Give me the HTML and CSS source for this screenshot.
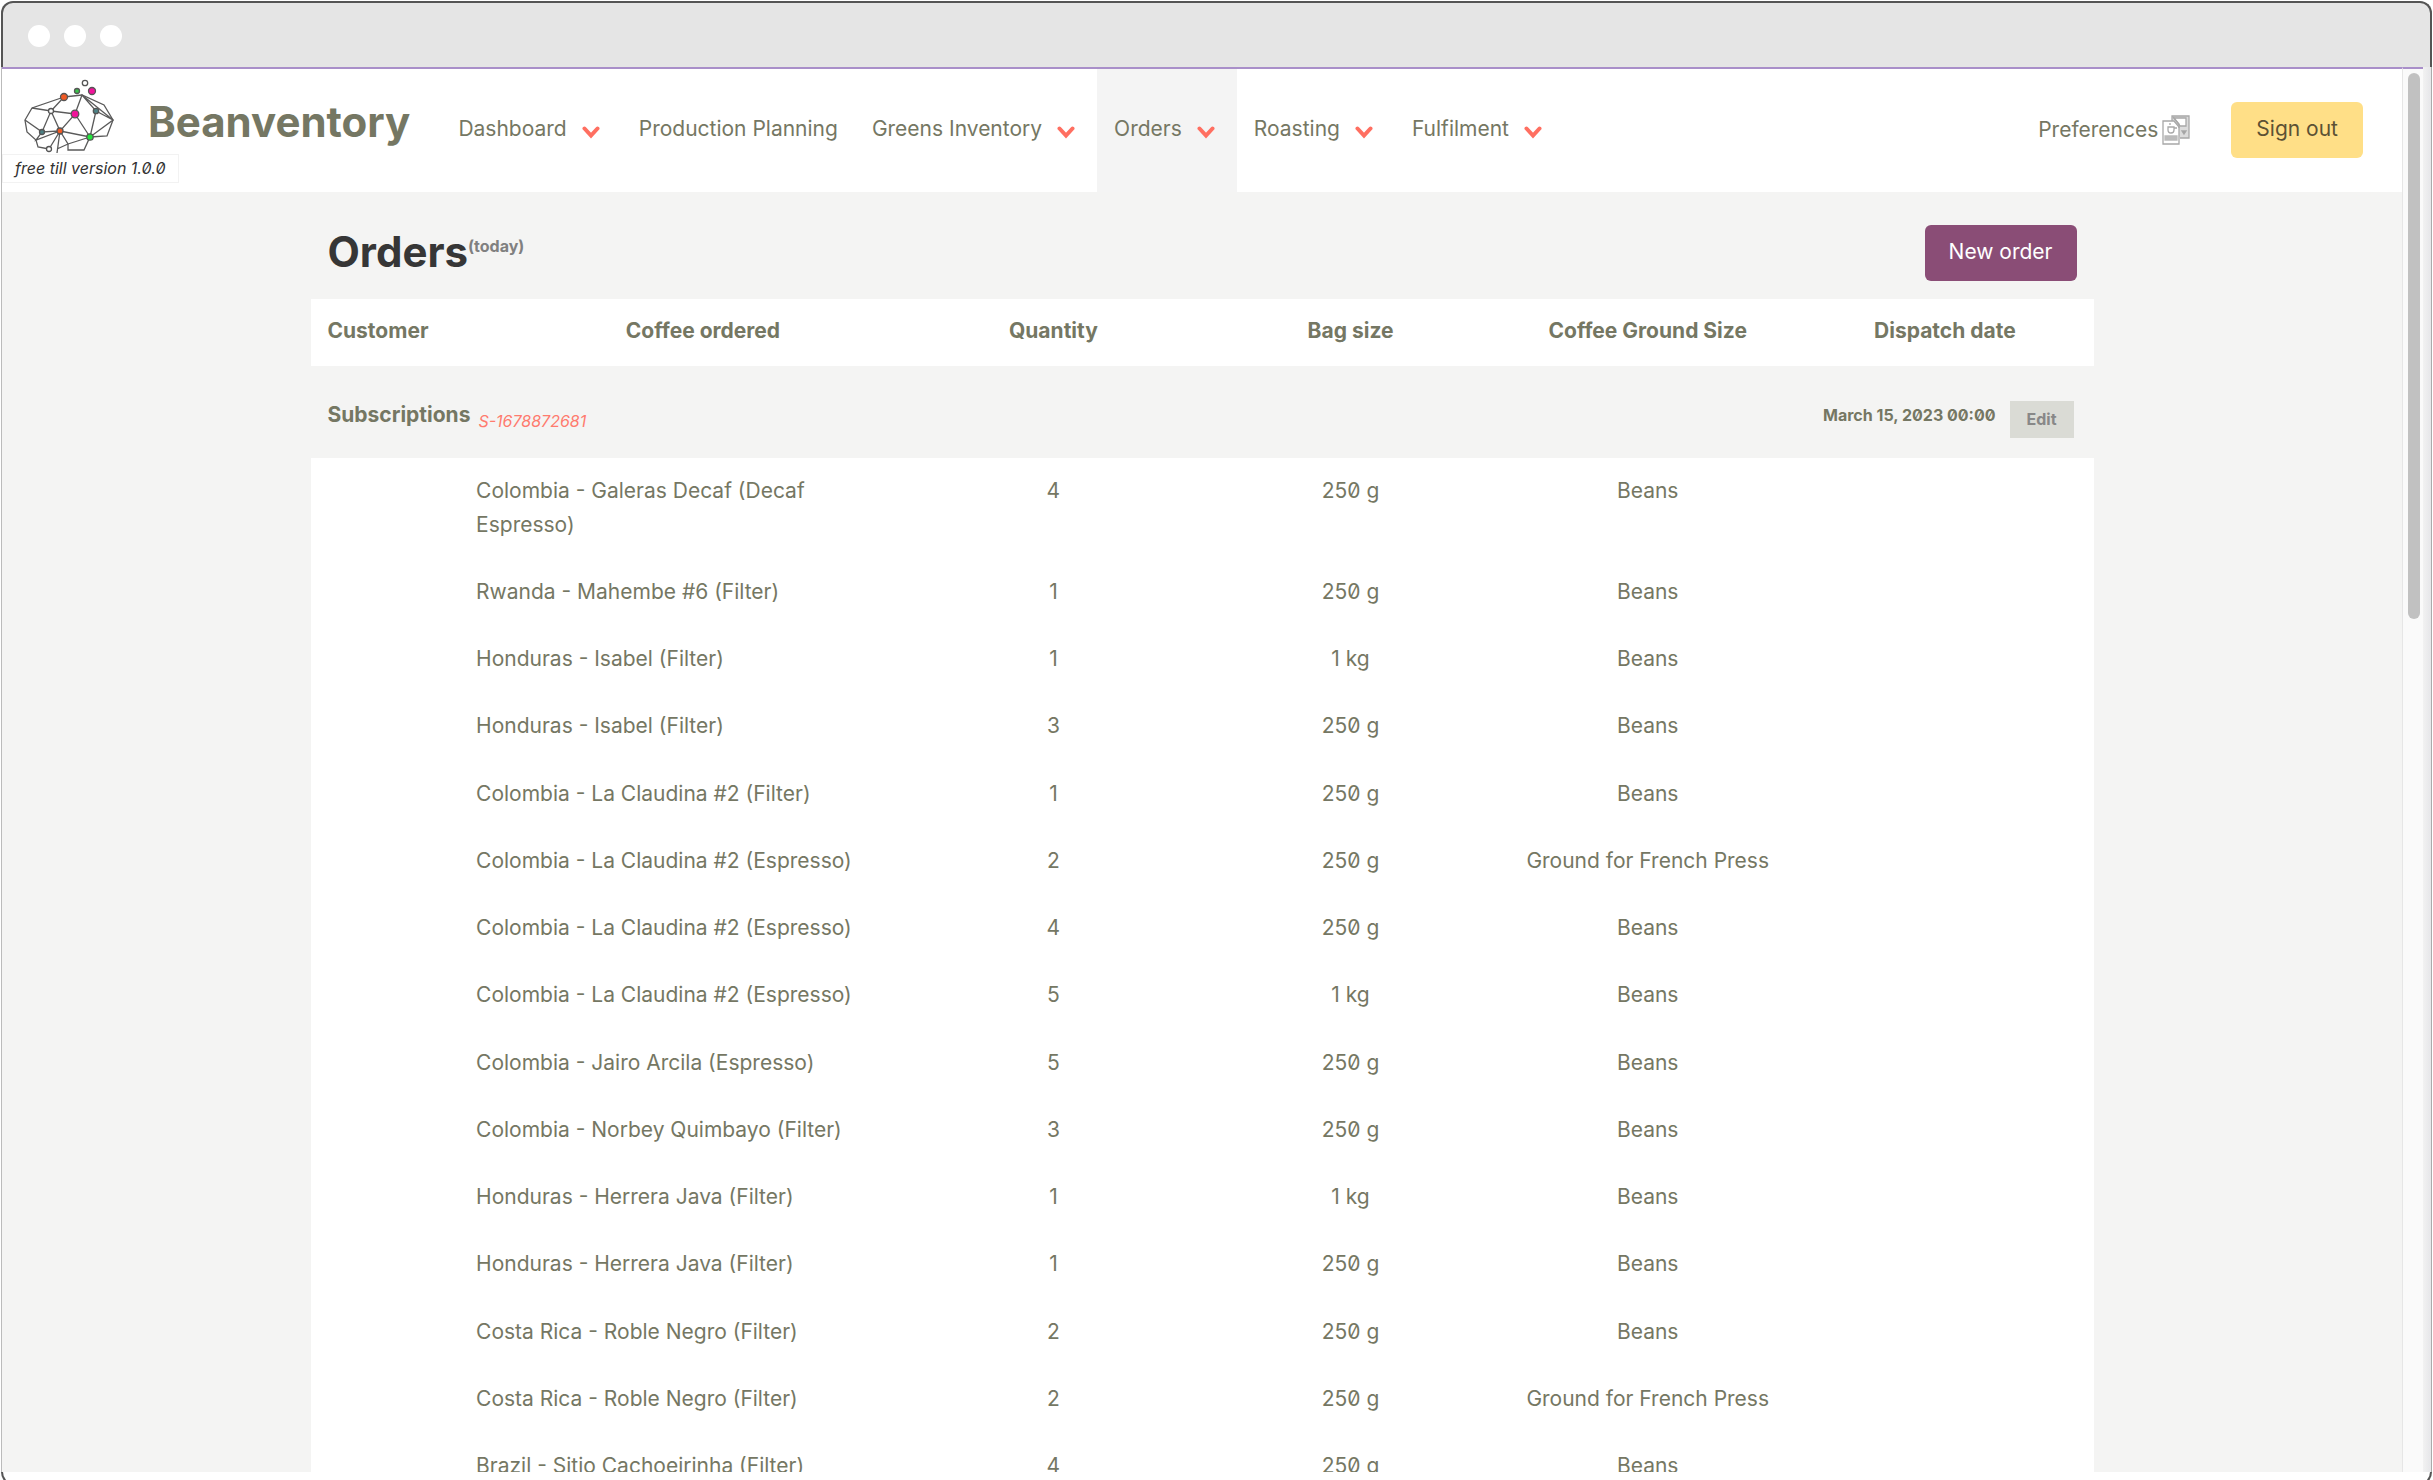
FILE: index.html
```html
<!DOCTYPE html>
<html lang="en">
<head>
<meta charset="utf-8">
<title>Beanventory – Orders</title>
<link rel="stylesheet" href="styles.css">
</head>
<body>
<svg class="defs" aria-hidden="true"><symbol id="chevron" viewBox="0 0 18 13"><path d="M2.500 2.500 9 9.500l6.500-7" fill="none" stroke="#ff6f61" stroke-width="4" stroke-linecap="round"/></symbol></svg>
<div class="chrome"><i class="dot"></i><i class="dot"></i><i class="dot"></i></div>
<div class="viewport">
  <div class="page">
    <header class="topbar">
      <a class="brand" href="#">
        <svg class="logo" viewBox="24 78 92 76" width="92" height="76" aria-hidden="true">
          <g fill="none" stroke="#5a5a5a" stroke-width="1.300">
            <path d="M64 97 32 108l-7 12 2 12 9 8 2 7 11 2M64 97l18-2 22 10 9 15-6 16-17 1-6 13H68v-6l-8-13"/>
            <path d="M32 108l19 3 13-14M51 111l24 3 7-19 14 16 17 9-23 17 6-26M82 95l31 25M75 114l15 23-30-6zM51 111l9 20-18 1zM25 120l17 12-6 8 24-9-11 18M60 131l-3 22M90 137l-22 7-11 5"/>
          </g>
          <g stroke="#555" stroke-width="1.300">
            <circle cx="64" cy="97" r="3.500" fill="#f15a24"/><circle cx="60" cy="131" r="3" fill="#f15a24"/>
            <circle cx="92" cy="91" r="3.500" fill="#f0149a"/><circle cx="75" cy="114" r="3.800" fill="#f0149a"/>
            <circle cx="77" cy="91" r="2.500" fill="#39c44a"/><circle cx="90" cy="137" r="3.200" fill="#22e53c"/>
            <circle cx="96" cy="111" r="2.700" fill="#4c8286"/><circle cx="42" cy="132" r="2.500" fill="#4c8286"/>
            <circle cx="85" cy="83" r="2.700" fill="#fff"/><circle cx="51" cy="111" r="2.500" fill="#fff"/><circle cx="49" cy="149" r="2.500" fill="#fff"/>
          </g>
        </svg>
        <span class="brand-name">Beanventory</span>
      </a>
      <span class="version">free till version 1.0.0</span>
      <nav class="nav">
        <a class="nav-item has-menu" href="#">Dashboard<svg class="chev"><use href="#chevron"/></svg></a>
        <a class="nav-item" href="#">Production Planning</a>
        <a class="nav-item has-menu" href="#">Greens Inventory<svg class="chev"><use href="#chevron"/></svg></a>
        <a class="nav-item has-menu active" href="#">Orders<svg class="chev"><use href="#chevron"/></svg></a>
        <a class="nav-item has-menu" href="#">Roasting<svg class="chev"><use href="#chevron"/></svg></a>
        <a class="nav-item has-menu" href="#">Fulfilment<svg class="chev"><use href="#chevron"/></svg></a>
      </nav>
      <div class="account">
        <a class="prefs" href="#">Preferences
          <svg width="28" height="30" viewBox="0 0 28 30" fill="none" stroke="#a8a8a8" stroke-width="1.300" aria-hidden="true"><path d="M10 6V1h17v22h-9" fill="#dcdcdc"/><path d="M12 3h12v8h-6z" fill="#fff"/><path d="M1 6h11l5 6v17H1z" fill="#fff"/><path d="M11 2l6 7v4"/><path d="M6 12h6v3a3 3 0 0 1-6 0zM12 13h3M8 10V8"/><path d="M3 21h12v4H3z" fill="#bbb" stroke="#bbb"/><path d="M20 16h4l-2 3z" fill="#999"/></svg></a>
        <button class="btn btn-yellow" type="button">Sign out</button>
      </div>
    </header>
    <main class="content">
      <div class="title-row">
        <h1 class="title">Orders<sup class="title-note">(today)</sup></h1>
        <button class="btn btn-plum" type="button">New order</button>
      </div>
      <table class="orders">
        <colgroup><col class="c1"><col class="c3"><col class="c2"><col class="c2"><col class="c2"><col class="c2"></colgroup>
        <thead><tr><th class="left">Customer</th><th class="coffee-head">Coffee ordered</th><th>Quantity</th><th>Bag size</th><th>Coffee Ground Size</th><th>Dispatch date</th></tr></thead>
        <tbody class="group"><tr><td colspan="6"><div class="group-row">
          <strong>Subscriptions</strong><em class="order-id">S-1678872681</em>
          <strong class="date">March 15, 2023 00:00</strong><button class="edit" type="button">Edit</button>
        </div></td></tr></tbody>
        <tbody class="lines">
          <tr><td></td><td>Colombia - Galeras Decaf (Decaf Espresso)</td><td>4</td><td>250 g</td><td>Beans</td><td></td></tr>
          <tr><td></td><td>Rwanda - Mahembe #6 (Filter)</td><td>1</td><td>250 g</td><td>Beans</td><td></td></tr>
          <tr><td></td><td>Honduras - Isabel (Filter)</td><td>1</td><td>1 kg</td><td>Beans</td><td></td></tr>
          <tr><td></td><td>Honduras - Isabel (Filter)</td><td>3</td><td>250 g</td><td>Beans</td><td></td></tr>
          <tr><td></td><td>Colombia - La Claudina #2 (Filter)</td><td>1</td><td>250 g</td><td>Beans</td><td></td></tr>
          <tr><td></td><td>Colombia - La Claudina #2 (Espresso)</td><td>2</td><td>250 g</td><td>Ground for French Press</td><td></td></tr>
          <tr><td></td><td>Colombia - La Claudina #2 (Espresso)</td><td>4</td><td>250 g</td><td>Beans</td><td></td></tr>
          <tr><td></td><td>Colombia - La Claudina #2 (Espresso)</td><td>5</td><td>1 kg</td><td>Beans</td><td></td></tr>
          <tr><td></td><td>Colombia - Jairo Arcila (Espresso)</td><td>5</td><td>250 g</td><td>Beans</td><td></td></tr>
          <tr><td></td><td>Colombia - Norbey Quimbayo (Filter)</td><td>3</td><td>250 g</td><td>Beans</td><td></td></tr>
          <tr><td></td><td>Honduras - Herrera Java (Filter)</td><td>1</td><td>1 kg</td><td>Beans</td><td></td></tr>
          <tr><td></td><td>Honduras - Herrera Java (Filter)</td><td>1</td><td>250 g</td><td>Beans</td><td></td></tr>
          <tr><td></td><td>Costa Rica - Roble Negro (Filter)</td><td>2</td><td>250 g</td><td>Beans</td><td></td></tr>
          <tr><td></td><td>Costa Rica - Roble Negro (Filter)</td><td>2</td><td>250 g</td><td>Ground for French Press</td><td></td></tr>
          <tr><td></td><td>Brazil - Sitio Cachoeirinha (Filter)</td><td>4</td><td>250 g</td><td>Beans</td><td></td></tr>
        </tbody>
      </table>
    </main>
  </div>
  <div class="scroll-track"><div class="scroll-thumb"></div></div>
  <div class="edge"></div>
</div>
<div class="foot"><div class="foot-frame"></div></div>
</body>
</html>
```
FILE: styles.css
```css
* { box-sizing: border-box; }
body {
  margin: 0;
  height: 100vh;
  padding: 1px 1px 0;
  display: flex;
  flex-direction: column;
  overflow: hidden;
  background: #fff;
  color: #757763;
  font: 21px/34px Inter, "Liberation Sans", sans-serif;
  font-feature-settings: "zero";
}
a { color: inherit; text-decoration: none; }
button { font: inherit; font-feature-settings: inherit; border: 0; cursor: pointer; }
.defs { position: absolute; width: 0; height: 0; }

/* window frame */
.chrome {
  flex: none;
  height: 66px;
  display: flex;
  align-items: center;
  gap: 14px;
  padding: 2px 25px 0;
  background: #e5e5e5;
  border: 2px solid #555;
  border-bottom: 0;
  border-radius: 12px 12px 0 0;
}
.dot { width: 22px; height: 22px; border-radius: 50%; background: #fff; }
.viewport {
  flex: 1;
  min-height: 0;
  display: flex;
  overflow: hidden;
  border-left: 1px solid #bbb;
  border-right: 1px solid #aaa;
}
.page { flex: 1; min-width: 0; overflow: hidden; background: #f4f4f3; border-top: 2px solid #a98fc9; }
.scroll-track {
  flex: none;
  width: 21px;
  padding: 4px 3px 0 5px;
  background: #fafafa;
  border-left: 1px solid #e6e6e6;
  border-top: 2px solid #a98fc9;
}
.scroll-thumb { width: 12px; height: 39%; border-radius: 6px; background: #c1c1c1; }
.edge { flex: none; width: 8px; background: linear-gradient(90deg, #f2f2f2, #e6e6e9); }
.foot { flex: none; height: 8px; overflow: hidden; }
.foot-frame { height: 14px; border: 2px solid #555; border-top: 0; border-radius: 0 0 14px 14px; }

/* top bar */
.topbar { position: relative; display: flex; height: 123px; background: #fff; }
.brand { display: flex; gap: 32px; padding: 9px 31px 0 22px; }
.logo { flex: none; }
.brand-name { font-size: 42px; line-height: 88px; font-weight: 700; }
.version {
  position: absolute;
  left: 0;
  bottom: 9px;
  padding: 0 12px;
  border: 1px solid #f2f2f2;
  background: #fff;
  color: #333;
  font-size: 16px;
  line-height: 27px;
  font-style: italic;
}
.nav { display: flex; }
.nav-item { display: flex; align-items: center; padding: 0 17px 3px; }
.nav-item.has-menu { padding-right: 22px; }
.nav-item.active { background: #f4f4f4; }
.chev { width: 18px; height: 13px; margin: 6px 0 0 15px; }
.account { display: flex; align-items: center; gap: 41px; margin-left: auto; padding: 0 39px 2px 0; }
.prefs { display: flex; align-items: center; gap: 4px; }
.btn { height: 56px; padding: 0 25px 2px; border-radius: 6px; }
.btn-yellow { background: #ffdf87; color: #5c5134; }
.btn-plum { padding: 0 24px 2px; background: #8a4d76; color: #fff; }

/* orders */
.content { max-width: 1783px; margin: 0 auto; }
.title-row { display: flex; align-items: center; justify-content: space-between; height: 107px; padding: 12px 17px 0; }
.title-row .btn { margin-top: 2px; }
.title { margin: 0; color: #363636; font-size: 42px; line-height: 56px; font-weight: 700; }
.title-note { color: #808080; font-size: 16px; line-height: 16px; }
.orders { width: 100%; table-layout: fixed; border-collapse: collapse; background: #fff; }
.c1 { width: 8.3333%; }
.c2 { width: 16.6667%; }
.c3 { width: 25%; }
th, .lines td { padding: 16px 17px 17px; text-align: center; vertical-align: top; }
th { padding: 15px 17px 18px; white-space: nowrap; }
th.left, .lines td:nth-child(2) { text-align: left; }
th.coffee-head { padding-left: 59px; }
.group td { padding: 0; background: #f4f4f3; }
.group-row { display: flex; align-items: center; height: 92px; padding: 6px 20px 0 17px; }
.order-id { margin: 12px 0 0 8px; color: #ff7b6e; font-size: 16px; }
.date { margin-left: auto; font-size: 16px; }
.edit { height: 37px; margin: 16px 0 8px 14px; padding: 0 17px; background: #dadbd5; color: #888; font-size: 16px; font-weight: 700; }
/* a hairline closes every fourth line */
.lines tr:nth-child(4n) td { border-bottom: 1px solid #fff; }
```
